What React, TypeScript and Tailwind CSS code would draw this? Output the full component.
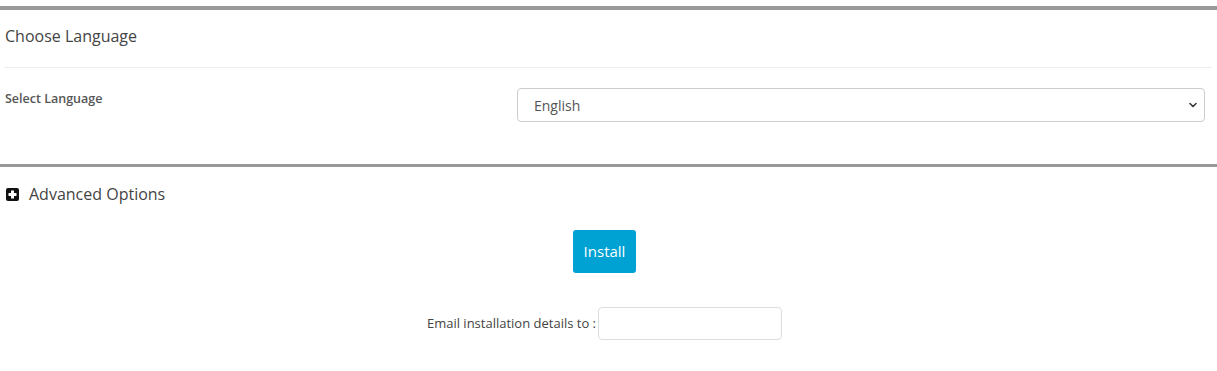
import { ChevronDown } from "lucide-react";

const App = () => {
  return (
    <div className="w-[1217px] min-h-[371px] bg-white text-[#555] font-['Open_Sans',sans-serif]">
      {/* Language section */}
      <div className="pt-[6px]">
        <div className="h-[4px] bg-[#999]" />
        <div className="px-[5px]">
          <h2 className="pt-[14px] pb-[19px] text-[16px] leading-[24px] text-[#444]">Choose Language</h2>
          <div className="h-px bg-[#eee] ml-[-1px]" />
          <div className="flex pt-[20px] pb-[42px]">
            <label className="w-[512px] pt-[1px] text-[12.5px] font-semibold leading-[20px] text-[#555]">
              Select Language
            </label>
            <div className="relative w-[688px]">
              <select className="w-full h-[34px] appearance-none rounded-[4px] border border-[#ccc] bg-white pl-[16px] pr-8 text-[14px] text-[#555] outline-none">
                <option>English</option>
              </select>
              <ChevronDown className="pointer-events-none absolute right-[6px] top-[11px] w-[12px] h-[12px] text-[#333]" strokeWidth={3} />
            </div>
          </div>
        </div>
      </div>

      {/* Advanced options */}
      <div className="h-[3px] bg-[#999]" />
      <div className="pl-[6px] pr-[14px] pt-[15px]">
        <div className="flex items-center gap-[10px]">
          <svg width="13" height="13" viewBox="0 0 13 13">
            <rect x="0" y="0" width="13" height="13" rx="2" fill="#111" />
            <rect x="5" y="2.5" width="3" height="8" fill="#fff" />
            <rect x="2.5" y="5" width="8" height="3" fill="#fff" />
          </svg>
          <span className="text-[16px] leading-[24px] text-[#444]">Advanced Options</span>
        </div>
        <div className="flex justify-center pt-[24px]">
          <button className="h-[43px] px-[11px] rounded-[3px] bg-[#00a1d3] text-white text-[15px]">Install</button>
        </div>
        <div className="flex justify-center items-center pt-[34px]">
          <span className="text-[13px] text-[#444] mr-[2px]">Email installation details to :</span>
          <input className="w-[184px] h-[33px] rounded-[4px] border border-[#ddd] outline-none px-2 text-[13px]" />
        </div>
      </div>
    </div>
  );
};

export default App;
